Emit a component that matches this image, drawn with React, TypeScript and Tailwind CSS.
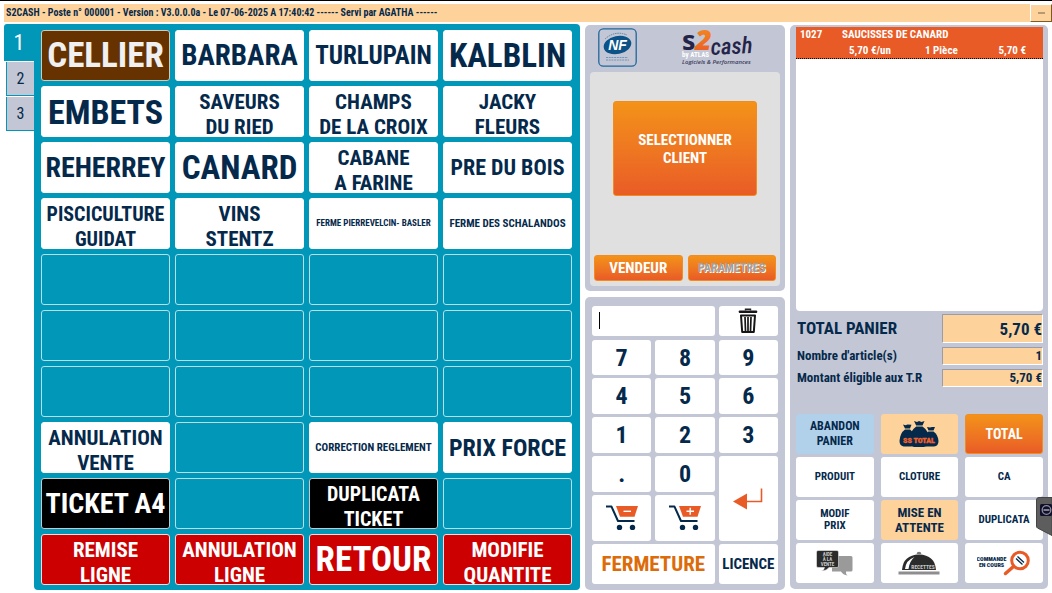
import type { ReactNode } from "react";

type Tone = "white" | "brown" | "black" | "red" | "empty";
type Cell = { lines: string[]; size: string; tone: Tone };

const tones: Record<Tone, string> = {
  white: "bg-white text-[#05294b] border-white",
  brown: "bg-[#663300] text-[#f0f0f0] border-[#d8c8b8]",
  black: "bg-black text-white border-[#c9c9c9]",
  red: "bg-[#cc0000] text-white border-[#f0dcdc]",
  empty: "bg-[#0097b8] text-white border-[#b5e0ea]",
};

const cell = (label: string, size: string, tone: Tone = "white"): Cell => ({
  lines: label.split("|"),
  size,
  tone,
});
const empty = (): Cell => ({ lines: [], size: "", tone: "empty" });

const TWO = "text-[21px]";

const cells: Cell[] = [
  cell("CELLIER", "text-[35px]", "brown"),
  cell("BARBARA", "text-[29px]"),
  cell("TURLUPAIN", "text-[25px]"),
  cell("KALBLIN", "text-[33px]"),
  cell("EMBETS", "text-[34px]"),
  cell("SAVEURS|DU RIED", TWO),
  cell("CHAMPS|DE LA CROIX", TWO),
  cell("JACKY|FLEURS", TWO),
  cell("REHERREY", "text-[28px]"),
  cell("CANARD", "text-[33px]"),
  cell("CABANE|A FARINE", TWO),
  cell("PRE DU BOIS", "text-[22px]"),
  cell("PISCICULTURE|GUIDAT", "text-[20px]"),
  cell("VINS|STENTZ", TWO),
  cell("FERME PIERREVELCIN- BASLER", "text-[9px]"),
  cell("FERME DES SCHALANDOS", "text-[11px]"),
  ...Array.from({ length: 12 }, empty),
  cell("ANNULATION|VENTE", TWO),
  empty(),
  cell("CORRECTION REGLEMENT", "text-[11px]"),
  cell("PRIX FORCE", "text-[24px]"),
  cell("TICKET A4", "text-[28px]", "black"),
  empty(),
  cell("DUPLICATA|TICKET", "text-[20px]", "black"),
  empty(),
  cell("REMISE|LIGNE", TWO, "red"),
  cell("ANNULATION|LIGNE", TWO, "red"),
  cell("RETOUR", "text-[35px]", "red"),
  cell("MODIFIE|QUANTITE", TWO, "red"),
];

function Lines({ lines }: { lines: string[] }) {
  return (
    <>
      {lines.map((l) => (
        <span key={l} className="block whitespace-nowrap">
          {l}
        </span>
      ))}
    </>
  );
}

function ProductGrid() {
  return (
    <section
      aria-label="Touches"
      className="grid min-w-0 flex-1 grid-cols-4 grid-rows-[repeat(10,minmax(0,1fr))] gap-[5px] rounded-[4px] rounded-tl-none bg-[#0097b8] pt-[6px] pr-2 pb-[5px] pl-[7px]"
    >
      {cells.map((c, i) => (
        <button
          key={i}
          type="button"
          aria-label={c.lines.length ? undefined : "Touche libre"}
          className={`flex min-w-0 flex-col items-center justify-center overflow-hidden rounded-[3px] border ${tones[c.tone]} ${c.size} ${c.lines.length > 1 ? "pt-[6px] leading-[25px]" : "leading-none"}`}
        >
          <Lines lines={c.lines} />
        </button>
      ))}
    </section>
  );
}

function NfLogo() {
  return (
    <svg viewBox="0 0 39 39" className="h-[39px] w-[39px]" role="img" aria-label="NF">
      <rect x="0.8" y="0.8" width="37.4" height="37.4" rx="4.5" fill="#c3c6d4" stroke="#1f679c" strokeWidth="1.3" />
      <path d="M7 11 Q17 2 29 7" fill="none" stroke="#4d86b0" strokeWidth="1" strokeDasharray="1.5 0.8" />
      <ellipse cx="19.5" cy="17" rx="14" ry="9" transform="rotate(-12 19.5 17)" fill="#0b5288" />
      <text x="19.5" y="21.6" textAnchor="middle" fontSize="14" fontStyle="italic" fontWeight="700" fill="#fff" fontFamily="Liberation Sans, sans-serif">
        NF
      </text>
      <path d="M8 29.5 H30 M8 32 H31" stroke="#6b98bb" strokeWidth="1" strokeDasharray="2 0.7" />
    </svg>
  );
}

function BrandLogo() {
  return (
    <svg viewBox="0 0 70 37" className="h-[37px] w-[70px] overflow-visible" role="img" aria-label="S2cash by ATLAS">
      <defs>
        <linearGradient id="two" x1="0" y1="0" x2="0" y2="1">
          <stop offset="0" stopColor="#f7941d" />
          <stop offset="1" stopColor="#e8562a" />
        </linearGradient>
      </defs>
      <text x="0" y="22" fontSize="27" fontWeight="700" fill="#24244a" fontFamily="Open Sans, sans-serif">
        s
      </text>
      <text x="13" y="22" fontSize="29" fontWeight="800" fontStyle="italic" fill="url(#two)" fontFamily="Open Sans, sans-serif">
        2
      </text>
      <text x="29" y="27" fontSize="23" fontWeight="500" fontStyle="italic" fill="#24244a" fontFamily="Roboto Condensed, Roboto, sans-serif" transform="rotate(-3 29 27)">
        cash
      </text>
      <text x="0" y="29" fontSize="7" fontWeight="700" fill="#fff" fontFamily="Roboto Condensed, Roboto, sans-serif">
        by ATLAS
      </text>
      <text x="0" y="35.500" fontSize="6" fontStyle="italic" fontWeight="600" fill="#3b3c5c" fontFamily="Open Sans, sans-serif">
        Logiciels &amp; Performances
      </text>
    </svg>
  );
}

const orange = "border border-[#f28c1c] bg-linear-to-b from-[#f39218] to-[#e95b26] rounded-[3px]";

function ClientPanel() {
  return (
    <section aria-label="Client" className="flex h-[266px] flex-col rounded-[5px] bg-[#c3c6d4] px-[5px] pt-[3px] pb-[5px]">
      <div className="flex h-[44px] shrink-0 items-start justify-between pr-[28px] pl-2">
        <NfLogo />
        <BrandLogo />
      </div>
      <div className="flex flex-1 flex-col justify-between rounded-[4px] bg-[#e0e0e0] px-[4px] pt-[29px] pb-[5px]">
        <button type="button" className={`mx-[19px] h-[95px] text-[15px] leading-[18px] text-white ${orange}`}>
          <Lines lines={["SELECTIONNER", "CLIENT"]} />
        </button>
        <div className="grid grid-cols-2 gap-[5px]">
          <button type="button" className={`h-[26px] text-[15px] leading-none text-white ${orange}`}>
            VENDEUR
          </button>
          <button
            type="button"
            disabled
            className={`h-[26px] text-[12px] leading-none text-[#a0a0a0] [text-shadow:1px_1px_0_#fff] ${orange}`}
          >
            PARAMETRES
          </button>
        </div>
      </div>
    </section>
  );
}

function TrashIcon() {
  return (
    <svg viewBox="0 0 20 26" className="h-[26px] w-[20px]" aria-hidden="true">
      <path d="M7.500 2.500 V1.200 H12.500 V2.500" fill="none" stroke="#222" strokeWidth="1.4" />
      <rect x="0.8" y="2.400" width="18.4" height="2.600" rx="0.800" fill="#161616" />
      <path d="M3 7.500 H17 L15.800 24 H4.200 Z" fill="#fff" stroke="#161616" strokeWidth="2" strokeLinejoin="round" />
      <path d="M7 9 L7.500 23 M10 9 V23 M13 9 L12.500 23" stroke="#161616" strokeWidth="1.700" />
    </svg>
  );
}

function CartIcon({ plus = false }: { plus?: boolean }) {
  return (
    <svg viewBox="0 0 34 26" className="h-[26px] w-[34px]" aria-hidden="true">
      <path d="M11 1 H33 L29.500 11.800 H15 Z" fill="#e95b26" />
      <path d="M1 1.600 H6.500 L13 16 H29.500" fill="none" stroke="#05294b" strokeWidth="2" strokeLinejoin="round" />
      <circle cx="14.500" cy="22.400" r="2.700" fill="#05294b" />
      <circle cx="27.500" cy="22.400" r="2.700" fill="#05294b" />
      <path d={plus ? "M18.500 6.300 H26 M22.200 2.800 V9.800" : "M18.500 6.300 H26"} stroke="#fff" strokeWidth="1.400" />
    </svg>
  );
}

function EnterIcon() {
  return (
    <svg viewBox="0 0 30 22" className="h-[22px] w-[30px]" aria-hidden="true">
      <path d="M0 13.500 L14 5.500 V21.500 Z" fill="#e95b26" />
      <path d="M13 13.500 H28.500 V0.500" fill="none" stroke="#e95b26" strokeWidth="1.600" />
    </svg>
  );
}

function Key({
  children,
  className = "",
  text = "text-[24px] text-[#05294b]",
  label,
}: {
  children: ReactNode;
  className?: string;
  text?: string;
  label?: string;
}) {
  return (
    <button
      type="button"
      aria-label={label}
      className={`flex min-w-0 items-center justify-center rounded-[3px] bg-white leading-none ${text} ${className}`}
    >
      {children}
    </button>
  );
}

function Keypad() {
  return (
    <section
      aria-label="Pavé numérique"
      className="grid flex-1 grid-cols-3 grid-rows-[31fr_36fr_36fr_36fr_36fr_47fr_40fr] gap-x-[4px] gap-y-[3px] rounded-[5px] bg-[#c3c6d4] px-[7px] pt-[9px] pb-[6px]"
    >
      <div className="col-span-2 mb-px flex items-center rounded-[3px] bg-white pl-[7px]">
        <span className="h-[17px] w-px bg-black" />
        <input aria-label="Saisie" className="h-full w-full min-w-0 bg-transparent outline-none" />
      </div>
      <Key label="Effacer" className="mb-px">
        <TrashIcon />
      </Key>
      {["7", "8", "9", "4", "5", "6", "1", "2", "3", ".", "0"].map((k) => (
        <Key key={k}>{k}</Key>
      ))}
      <Key label="Valider" className="row-span-2">
        <EnterIcon />
      </Key>
      <Key label="Retirer du panier">
        <CartIcon />
      </Key>
      <Key label="Ajouter au panier">
        <CartIcon plus />
      </Key>
      <Key className="col-span-2" text="text-[21px] text-[#dc6c0a]">
        FERMETURE
      </Key>
      <Key text="text-[15px] text-[#05294b]">LICENCE</Key>
    </section>
  );
}

function BagsIcon() {
  return (
    <svg viewBox="0 0 40 28" className="h-[28px] w-[40px]" aria-hidden="true">
      <g fill="#05294b">
        <path d="M15 1 L18 2 L20 1 L22.500 2 L25.500 1 L23.500 5.500 H17.200 Z" />
        <path d="M17.200 6.500 H23.500 Q30 11 30 19 Q30 26 25 27 H15 Q10 26 10.500 19 Q11 11 17.200 6.500 Z" />
        <path d="M4 4.500 L6.500 5.200 L8.500 4.500 L12.500 4.800 L11 8.500 H6 Z" />
        <path d="M6 9.500 H11 Q16 13 16 20 Q16 26 12 26.500 H4.500 Q0.500 25.500 0.500 21 Q1 13 6 9.500 Z" />
        <path d="M28 7 L31 7.500 L33 7 L36 7 L34.500 10.500 H29.500 Z" />
        <path d="M29.500 11.500 H34.500 Q39 14.500 39.500 21 Q39.500 26 35 26.500 H27 Q24 26 24.500 20 Q25 14 29.500 11.500 Z" />
      </g>
      <text x="20" y="22.500" textAnchor="middle" fontSize="8" fontWeight="900" fill="#f0602a" stroke="#f0602a" strokeWidth="0.3" fontFamily="Roboto Condensed, Roboto, sans-serif">
        SS TOTAL
      </text>
    </svg>
  );
}

function HelpIcon() {
  return (
    <svg viewBox="0 0 37 26" className="h-[26px] w-[37px]" aria-hidden="true">
      <path d="M16 6 H35 Q36.500 6 36.500 7.500 V20 Q36.500 21.500 35 21.500 H30 Q29.500 24 31.500 25.500 Q27 25 25 21.500 H16 Z" fill="#9a9a9a" />
      <path d="M2 0.500 H21 Q22.500 0.500 22.500 2 V16 Q22.500 17.500 21 17.500 H13 Q11 20.500 5.500 21 Q8.500 19.500 8.500 17.500 H2 Q0.500 17.500 0.500 16 V2 Q0.500 0.500 2 0.500 Z" fill="#2b2b2b" stroke="#fff" strokeWidth="0.500" />
      <g fill="#c8c8c8" fontSize="5" fontWeight="700" textAnchor="middle" fontFamily="Roboto Condensed, Roboto, sans-serif">
        <text x="11.500" y="5.500">AIDE</text>
        <text x="11.500" y="10.800">À LA</text>
        <text x="11.500" y="16">VENTE</text>
      </g>
    </svg>
  );
}

function RecipeIcon() {
  return (
    <svg viewBox="0 0 42 24" className="h-[24px] w-[42px]" aria-hidden="true">
      <path d="M4 19 Q5 4 21 3.500 Q37 4 38 19 Z" fill="#2b2b2b" />
      <path d="M7 18 Q8 9 16.500 6 Q11.500 10 10.500 18 Z" fill="#fff" />
      <path d="M18.500 3.200 Q18.800 0.800 21 0.800 Q23.200 0.800 23.500 3.200 Z" fill="#777" />
      <rect x="0.500" y="20.500" width="41" height="3" fill="#8e8e8e" />
      <text x="25" y="18" textAnchor="middle" fontSize="5.500" fontWeight="700" fill="#c8c8c8" fontFamily="Roboto Condensed, Roboto, sans-serif">
        RECETTES
      </text>
    </svg>
  );
}

function OrdersIcon() {
  return (
    <svg viewBox="-2 0 54 26" className="h-[26px] w-[54px]" aria-hidden="true">
      <g fill="#05294b" fontSize="6" fontWeight="900" textAnchor="middle" fontFamily="Roboto Condensed, Roboto, sans-serif">
        <text x="12.500" y="11">COMMANDE</text>
        <text x="12.500" y="16.500">EN COURS</text>
      </g>
      <path d="M34.500 16.500 L26.500 23.500" stroke="#e95b26" strokeWidth="3.500" strokeLinecap="round" />
      <circle cx="41" cy="10.500" r="8.300" fill="#fff" stroke="#e95b26" strokeWidth="3" />
      <path d="M37 8.500 L43.500 14.500 M38.500 6.500 L45 12.500" stroke="#05294b" strokeWidth="1.300" />
    </svg>
  );
}

function TotalRow({ id, label, value, big = false }: { id: string; label: string; value: string; big?: boolean }) {
  return (
    <div className="flex items-center justify-between">
      <label htmlFor={id} className={big ? "pl-px text-[17px]" : "pl-px text-[13px] leading-[18px]"}>
        {label}
      </label>
      <input
        id={id}
        readOnly
        value={value}
        className={`w-[41%] rounded-none border border-t-[#9a9ca8] border-r-white border-b-white border-l-[#9a9ca8] bg-[#fdd29b] text-right outline-none ${big ? "h-[29px] text-[17px]" : "h-[18px] text-[13px]"}`}
      />
    </div>
  );
}

function Action({ children, className = "bg-white text-[11px] leading-[12px]", label }: { children: ReactNode; className?: string; label?: string }) {
  return (
    <button
      type="button"
      aria-label={label}
      className={`flex h-10 min-w-0 flex-col items-center justify-center rounded-[3px] ${className}`}
    >
      {children}
    </button>
  );
}

function BasketPanel() {
  return (
    <section aria-label="Panier" className="my-px flex min-h-0 min-w-0 flex-col rounded-[5px] bg-[#c3c6d4] pt-[2px] pr-[5px] pb-[6px] pl-[6px] text-[#05294b]">
      <ul className="min-h-0 flex-1 rounded-b-[4px] bg-white">
        <li className="grid h-8 grid-cols-[42fr_83fr_71fr_30fr] border-b border-dotted border-black bg-[#e95b26] pr-[17px] pl-[4px] text-[11px] leading-[15px] text-white">
          <span>1027</span>
          <span className="col-span-3">SAUCISSES DE CANARD</span>
          <span />
          <span className="pl-[7px]">5,70 €/un</span>
          <span>1 Pièce</span>
          <span className="text-right whitespace-nowrap">5,70 €</span>
        </li>
      </ul>
      <div className="mt-[3px] flex flex-col gap-[4px] pb-[27px]">
        <TotalRow id="total" label="TOTAL PANIER" value="5,70 €" big />
        <TotalRow id="count" label="Nombre d'article(s)" value="1" />
        <TotalRow id="tr" label="Montant éligible aux T.R" value="5,70 €" />
      </div>
      <div className="grid grid-cols-3 gap-x-[7px] gap-y-[3px]">
        <Action className="bg-[#b1d0ea] text-[12px] leading-[15px]">
          <Lines lines={["ABANDON", "PANIER"]} />
        </Action>
        <Action className="bg-[#fdd29b]" label="Sous-total">
          <BagsIcon />
        </Action>
        <Action className={`text-[14px] text-white ${orange}`}>TOTAL</Action>
        <Action>PRODUIT</Action>
        <Action>CLOTURE</Action>
        <Action>CA</Action>
        <Action>
          <Lines lines={["MODIF", "PRIX"]} />
        </Action>
        <Action className="bg-[#fdd29b] text-[13px] leading-[15px]">
          <Lines lines={["MISE EN", "ATTENTE"]} />
        </Action>
        <Action>DUPLICATA</Action>
        <Action label="Aide à la vente">
          <HelpIcon />
        </Action>
        <Action label="Recettes">
          <RecipeIcon />
        </Action>
        <Action label="Commande en cours">
          <OrdersIcon />
        </Action>
      </div>
    </section>
  );
}

export default function App() {
  return (
    <div className="relative flex h-screen min-h-[560px] flex-col overflow-hidden border-t border-black bg-white pt-[3px] pb-[3px] font-['Roboto_Condensed','Liberation_Sans_Narrow',Roboto,sans-serif] font-bold">
      <header className="ml-1 flex h-[18px] shrink-0 items-stretch justify-between bg-[#fdd29b] pl-[2px] text-[#05294b]">
        <h1 className="text-[10px] leading-[18px] whitespace-pre">
          S2CASH - Poste n° 000001 - Version : V3.0.0.0a - Le 07-06-2025 A 17:40:42 ------ Servi par AGATHA ------
        </h1>
        <button
          type="button"
          aria-label="Réduire"
          className="flex w-[22px] items-center justify-center border border-t-white border-r-[#7c5a24] border-b-[#7c5a24] border-l-white"
        >
          <span className="h-[2px] w-[7px] bg-[#b79a74]" />
        </button>
      </header>
      <main className="mt-[2px] grid min-h-0 flex-1 grid-cols-[minmax(0,576fr)_minmax(0,200fr)_minmax(0,258fr)] grid-rows-[minmax(0,1fr)] gap-[5px] px-1">
        <div className="flex min-w-0">
          <nav aria-label="Pages" className="flex w-[30px] flex-col gap-px font-normal">
            <button type="button" className="h-[37px] rounded-tl-[3px] bg-[#0097b8] text-[22px] leading-none text-white">
              1
            </button>
            <button type="button" className="ml-[2px] h-[34px] border-b border-l border-[#0097b8] bg-[#c3c6d4] text-[16px] leading-none text-[#05294b]">
              2
            </button>
            <button type="button" className="ml-[2px] h-[34px] border-b border-l border-[#0097b8] bg-[#c3c6d4] text-[16px] leading-none text-[#05294b]">
              3
            </button>
          </nav>
          <ProductGrid />
        </div>
        <div className="mt-px flex min-w-0 flex-col gap-[6px]">
          <ClientPanel />
          <Keypad />
        </div>
        <BasketPanel />
      </main>
      <button type="button" aria-label="Assistance" className="absolute right-0 bottom-[57px] h-[39px] w-[16px]">
        <svg viewBox="0 0 16 39" className="h-full w-full" aria-hidden="true">
          <path d="M3 0.500 H16 V38.500 L1.500 31 Q0.500 30.500 0.500 29 V3 Q0.500 0.500 3 0.500 Z" fill="#5d5d5d" stroke="#444" />
          <rect x="4" y="7" width="12" height="12" rx="1.500" fill="#10102c" />
          <circle cx="10.500" cy="13" r="4.300" fill="#10102c" stroke="#8d8d9c" strokeWidth="1.300" />
          <path d="M7.500 13 H13.500" stroke="#8d8d9c" strokeWidth="1.800" />
        </svg>
      </button>
    </div>
  );
}
